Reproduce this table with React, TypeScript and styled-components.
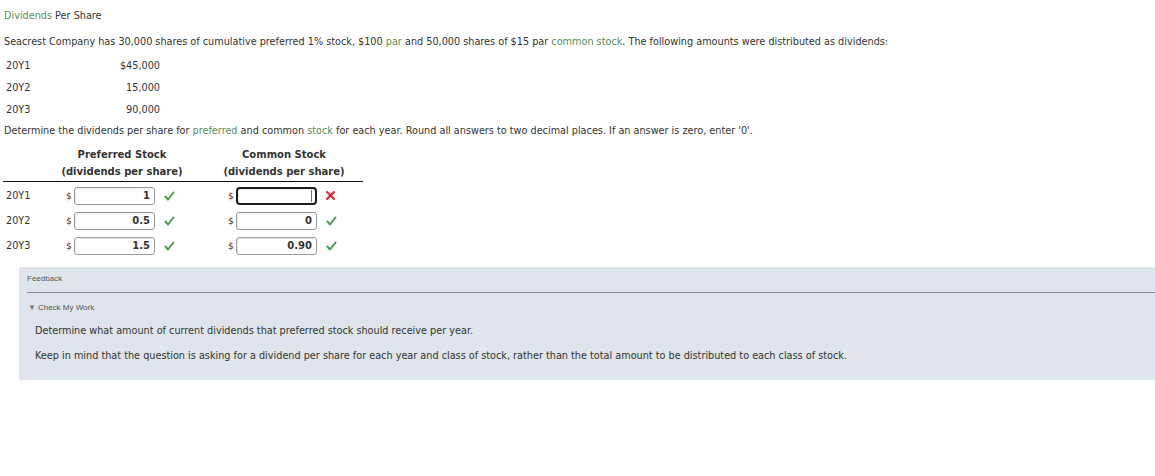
import React from "react";
import styled, { createGlobalStyle } from "styled-components";

const Global = createGlobalStyle`
  html, body { margin: 0; padding: 0; background: #fff; }
  body {
    font-family: "DejaVu Sans", Verdana, sans-serif;
    font-size: 9.7px;
    color: #333;
    overflow: hidden;
  }
`;

const Page = styled.div`
  padding: 9px 0 0 4px;
`;

const Title = styled.div`
  line-height: 14px;
  height: 14px;
`;

const Link = styled.span`
  color: #5c8d5c;
`;

const Para = styled.div<{ $top: number }>`
  margin-top: ${(p) => p.$top}px;
  line-height: 14px;
  height: 14px;
  white-space: nowrap;
`;

const AmountTable = styled.div`
  margin-top: 5px;
  padding-left: 2px;
  display: grid;
  grid-template-columns: 60px 94px;
  grid-auto-rows: 22px;
  align-items: center;
`;

const Amount = styled.div`
  text-align: right;
`;

const AnswerGrid = styled.div`
  margin-top: 8px;
  margin-left: -1px;
  width: 360px;
  display: grid;
  grid-template-columns: 57px 124px 38px 124px 17px;
`;

const HeaderRow = styled.div`
  grid-column: 1 / -1;
  display: grid;
  grid-template-columns: subgrid;
  border-bottom: 1px solid #111;
  padding-bottom: 1px;
  margin-bottom: 1px;
`;

const HeaderCell = styled.div<{ $col: number }>`
  grid-column: ${(p) => p.$col};
  text-align: center;
  font-weight: bold;
  font-size: 10px;
  line-height: 17px;
  white-space: nowrap;
`;

const DataRow = styled.div`
  grid-column: 1 / -1;
  display: grid;
  grid-template-columns: subgrid;
  height: 25px;
  align-items: center;
`;

const YearCell = styled.div`
  padding-left: 3px;
`;

const AnswerCell = styled.div<{ $col: number }>`
  grid-column: ${(p) => p.$col};
  display: flex;
  align-items: center;
  padding-left: 6px;
`;

const Dollar = styled.span`
  width: 8px;
  font-size: 9px;
`;

const InputBox = styled.div<{ $focused?: boolean }>`
  box-sizing: border-box;
  width: 81px;
  height: 18px;
  border: ${(p) => (p.$focused ? "2px solid #1b1b1b" : "1px solid #9a9a9a")};
  border-radius: ${(p) => (p.$focused ? "4px" : "3px")};
  display: flex;
  align-items: center;
  justify-content: flex-end;
  padding-right: ${(p) => (p.$focused ? "3px" : "4px")};
  font-weight: bold;
  font-size: 10px;
  background: #fff;
  box-shadow: inset 1px 1px 1px rgba(0, 0, 0, 0.08);
`;

const Caret = styled.span`
  width: 1px;
  height: 12px;
  background: #3d7fbf;
`;

const Mark = styled.span`
  margin-left: 9px;
  display: flex;
  align-items: center;
`;

const Feedback = styled.div`
  margin-top: 9px;
  margin-left: 15px;
  background: #dfe5ea;
  padding: 6px 0 18px 8px;
  height: 113px;
  box-sizing: border-box;
  border-radius: 2px;
`;

const SmallLabel = styled.div`
  font-family: "Liberation Sans", Arial, sans-serif;
  font-size: 8px;
  line-height: 12px;
  color: #555;
  display: flex;
  align-items: center;
  gap: 2px;
`;

const Rule = styled.div`
  margin-top: 7px;
  height: 1px;
  background: #85898d;
`;

const HintLabel = styled(SmallLabel)`
  margin-top: 9px;
  padding-left: 1px;
`;

const Triangle = styled.span`
  font-size: 8px;
  color: #7a7a7a;
`;

const Hint = styled.div<{ $top: number }>`
  margin-top: ${(p) => p.$top}px;
  padding-left: 8px;
  line-height: 14px;
  white-space: nowrap;
  color: #333;
`;

const Check = () => (
  <svg width="11" height="10" viewBox="0 0 11 10">
    <path d="M1.5 5.5 L4 8.5 L9.5 1.5" fill="none" stroke="#4b9b4b" strokeWidth="2" strokeLinecap="round" strokeLinejoin="round" />
  </svg>
);

const Cross = () => (
  <svg width="9" height="9" viewBox="0 0 9 9">
    <path d="M1.2 1.2 L7.8 7.8 M7.8 1.2 L1.2 7.8" stroke="#e0262b" strokeWidth="2.2" strokeLinecap="square" />
  </svg>
);

type Answer = { value: string; ok: boolean; focused?: boolean };
const rows: { year: string; pref: Answer; common: Answer }[] = [
  { year: "20Y1", pref: { value: "1", ok: true }, common: { value: "", ok: false, focused: true } },
  { year: "20Y2", pref: { value: "0.5", ok: true }, common: { value: "0", ok: true } },
  { year: "20Y3", pref: { value: "1.5", ok: true }, common: { value: "0.90", ok: true } },
];

const AnswerInput = ({ a, col }: { a: Answer; col: number }) => (
  <AnswerCell $col={col}>
    <Dollar>$</Dollar>
    <InputBox $focused={a.focused}>
      {a.value}
      {a.focused && <Caret />}
    </InputBox>
    <Mark>{a.ok ? <Check /> : <Cross />}</Mark>
  </AnswerCell>
);

export default function App() {
  return (
    <>
      <Global />
      <Page>
        <Title>
          <Link>Dividends</Link> Per Share
        </Title>
        <Para $top={12}>
          Seacrest Company has 30,000 shares of cumulative preferred 1% stock, $100 <Link>par</Link> and 50,000
          shares of $15 par <Link>common stock</Link>. The following amounts were distributed as dividends:
        </Para>
        <AmountTable>
          <div>20Y1</div>
          <Amount>$45,000</Amount>
          <div>20Y2</div>
          <Amount>15,000</Amount>
          <div>20Y3</div>
          <Amount>90,000</Amount>
        </AmountTable>
        <Para $top={4}>
          Determine the dividends per share for <Link>preferred</Link> and common <Link>stock</Link> for each year.
          Round all answers to two decimal places. If an answer is zero, enter '0'.
        </Para>
        <AnswerGrid>
          <HeaderRow>
            <HeaderCell $col={2}>
              Preferred Stock
              <br />
              (dividends per share)
            </HeaderCell>
            <HeaderCell $col={4}>
              Common Stock
              <br />
              (dividends per share)
            </HeaderCell>
          </HeaderRow>
          {rows.map((r) => (
            <DataRow key={r.year}>
              <YearCell>{r.year}</YearCell>
              <AnswerInput a={r.pref} col={2} />
              <AnswerInput a={r.common} col={4} />
            </DataRow>
          ))}
        </AnswerGrid>
        <Feedback>
          <SmallLabel>Feedback</SmallLabel>
          <Rule />
          <HintLabel>
            <Triangle>▼</Triangle>Check My Work
          </HintLabel>
          <Hint $top={10}>Determine what amount of current dividends that preferred stock should receive per year.</Hint>
          <Hint $top={11}>
            Keep in mind that the question is asking for a dividend per share for each year and class of stock, rather
            than the total amount to be distributed to each class of stock.
          </Hint>
        </Feedback>
      </Page>
    </>
  );
}
